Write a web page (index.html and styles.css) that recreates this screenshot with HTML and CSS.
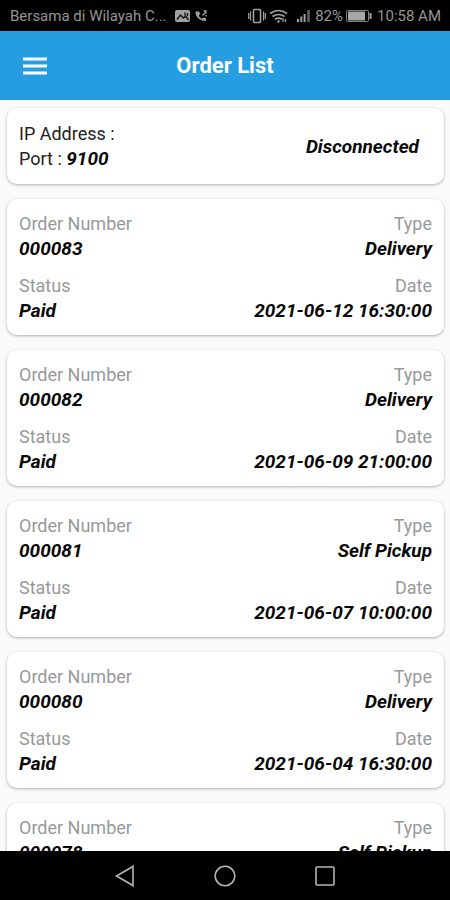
FILE: index.html
```html
<!DOCTYPE html>
<html lang="en">
<head>
<meta charset="utf-8">
<meta name="viewport" content="width=device-width, initial-scale=1">
<title>Order List</title>
<link rel="stylesheet" href="styles.css">
</head>
<body>
<div class="statusbar">
  <span class="carrier">Bersama di Wilayah C...</span>
  <svg class="notice" width="34" height="14" viewBox="0 0 34 14" aria-hidden="true">
    <rect x="0" y="1" width="15" height="12" rx="2" fill="#a0a0a0"/>
    <path d="M2 10.500 5.500 6l3 3 2-2 3 4M10 3.500v3M12.500 4v3" fill="none" stroke="#111" stroke-width="1.300"/>
    <path d="M20.500 2.500c0 5.500 4 9.500 10.500 9.500V9.300l-2.800-.8-1.500 1.300c-1.300-.7-2.300-1.800-3-3L25 5.300l-.8-2.800z" fill="#a0a0a0"/>
    <path d="M27.500 6.500 30.500 3.500M28.500 2h2.500v2.500M31 6v1.500" fill="none" stroke="#a0a0a0" stroke-width="1.300"/>
  </svg>
  <span class="spacer"></span>
  <svg class="signals" width="65" height="16" viewBox="0 0 65 16" fill="none" stroke="#a0a0a0" aria-hidden="true">
    <rect x="5.500" y="1.500" width="7" height="13" rx="1" stroke-width="1.600"/>
    <path d="M2.500 3.500v9M.7 5v6M15.500 3.500v9M17.300 5v6" stroke-width="1.200"/>
    <path d="M22 5.500q8.500-6 17 0M24.500 8.500q6-4 12 0M27 11.300q3.500-2.300 7 0" stroke-width="1.700"/>
    <circle cx="30.500" cy="13.500" r="1.200" fill="#a0a0a0" stroke="none"/>
    <path d="M35 10v4M37.500 11v3" stroke-width="1.300"/>
    <path d="M50 11v3M53.300 8.500V14M56.600 6v8" stroke-width="2"/>
    <path d="M60.500 2v12" stroke-width="2.500" stroke="#666"/>
  </svg>
  <span class="percent">82%</span>
  <svg class="battery" width="26" height="12" viewBox="0 0 26 12" aria-hidden="true">
    <rect x=".5" y=".5" width="22" height="11" rx="1" fill="none" stroke="#808080"/>
    <rect x="2" y="1.500" width="17" height="9" fill="#a8a8a8"/>
    <path d="M24.500 3v6" stroke="#a0a0a0" stroke-width="2"/>
  </svg>
  <span class="clock">10:58 AM</span>
</div>

<header class="appbar">
  <button class="menu" type="button" aria-label="Menu">
    <svg width="24" height="18" viewBox="0 0 24 18" aria-hidden="true"><path d="M0 2h24M0 9h24M0 16h24" stroke="#fff" stroke-width="2.800"/></svg>
  </button>
  <h1>Order List</h1>
</header>

<main class="content">
  <section class="card printer">
    <div>
      <p>IP Address :</p>
      <p>Port : <strong>9100</strong></p>
    </div>
    <strong>Disconnected</strong>
  </section>

  <dl class="card order">
    <div><dt>Order Number</dt><dd>000083</dd></div>
    <div><dt>Type</dt><dd>Delivery</dd></div>
    <div><dt>Status</dt><dd>Paid</dd></div>
    <div><dt>Date</dt><dd>2021-06-12 16:30:00</dd></div>
  </dl>
  <dl class="card order">
    <div><dt>Order Number</dt><dd>000082</dd></div>
    <div><dt>Type</dt><dd>Delivery</dd></div>
    <div><dt>Status</dt><dd>Paid</dd></div>
    <div><dt>Date</dt><dd>2021-06-09 21:00:00</dd></div>
  </dl>
  <dl class="card order">
    <div><dt>Order Number</dt><dd>000081</dd></div>
    <div><dt>Type</dt><dd>Self Pickup</dd></div>
    <div><dt>Status</dt><dd>Paid</dd></div>
    <div><dt>Date</dt><dd>2021-06-07 10:00:00</dd></div>
  </dl>
  <dl class="card order">
    <div><dt>Order Number</dt><dd>000080</dd></div>
    <div><dt>Type</dt><dd>Delivery</dd></div>
    <div><dt>Status</dt><dd>Paid</dd></div>
    <div><dt>Date</dt><dd>2021-06-04 16:30:00</dd></div>
  </dl>
  <dl class="card order">
    <div><dt>Order Number</dt><dd>000078</dd></div>
    <div><dt>Type</dt><dd>Self Pickup</dd></div>
  </dl>
</main>

<nav class="navbar" aria-label="System">
  <button type="button" aria-label="Back"><svg width="22" height="22" viewBox="0 0 22 22" aria-hidden="true"><path d="M2.500 11 19 1.500v19z"/></svg></button>
  <button type="button" aria-label="Home"><svg width="22" height="22" viewBox="0 0 22 22" aria-hidden="true"><circle cx="11" cy="11" r="9.800"/></svg></button>
  <button type="button" aria-label="Recent apps"><svg width="22" height="22" viewBox="0 0 22 22" aria-hidden="true"><rect x="2" y="2" width="18" height="18" rx="1"/></svg></button>
</nav>
</body>
</html>
```
FILE: styles.css
```css
* {
  box-sizing: border-box;
  margin: 0;
}

body {
  display: flex;
  flex-direction: column;
  height: 100vh;
  overflow: hidden;
  background: #fafafa;
  color: #222;
  font: 18px/25px Roboto, sans-serif;
}

button {
  display: flex;
  align-items: center;
  justify-content: center;
  padding: 0;
  border: 0;
  background: none;
}

svg {
  display: block;
  flex: none;
}

.statusbar {
  display: flex;
  flex: none;
  align-items: center;
  height: 31px;
  padding: 1px 9px 0 10px;
  background: #000;
  color: #959595;
  font-size: 15px;
  white-space: nowrap;
}

.notice {
  margin-left: 8px;
}

.spacer {
  flex: 1;
}

.percent {
  margin: 0 3px 0 2px;
}

.clock {
  margin-left: 5px;
}

.appbar {
  display: grid;
  flex: none;
  grid-template-columns: 48px 1fr 48px;
  align-items: center;
  height: 69px;
  padding: 0 11px;
  background: #249ee0;
  color: #fff;
}

.menu {
  height: 48px;
}

.appbar h1 {
  font-size: 22px;
  font-weight: 700;
  text-align: center;
}

.content {
  display: flex;
  flex: 1;
  flex-direction: column;
  gap: 15px;
  min-height: 0;
  padding: 8px 6px 0 7px;
  overflow: hidden;
}

.card {
  flex: none;
  padding: 12px;
  border-radius: 10px;
  background: #fff;
  box-shadow: 0 1px 3px rgba(0, 0, 0, 0.3);
}

.printer {
  display: flex;
  align-items: center;
  justify-content: space-between;
  padding: 13px 25px 13px 12px;
}

p,
dt,
dd {
  height: 25px;
}

strong,
dd {
  color: #080808;
  font-size: 19px;
  font-style: italic;
  font-weight: 700;
}

.order {
  display: grid;
  grid-template-columns: auto auto;
  row-gap: 12px;
}

.order div:nth-child(even) {
  text-align: right;
}

dt {
  color: #999;
}

.navbar {
  display: flex;
  flex: none;
  justify-content: center;
  gap: 52px;
  height: 49px;
  background: #000;
}

.navbar button {
  width: 48px;
}

.navbar svg {
  fill: none;
  stroke: #b5b5b5;
  stroke-width: 1.6;
}
```
